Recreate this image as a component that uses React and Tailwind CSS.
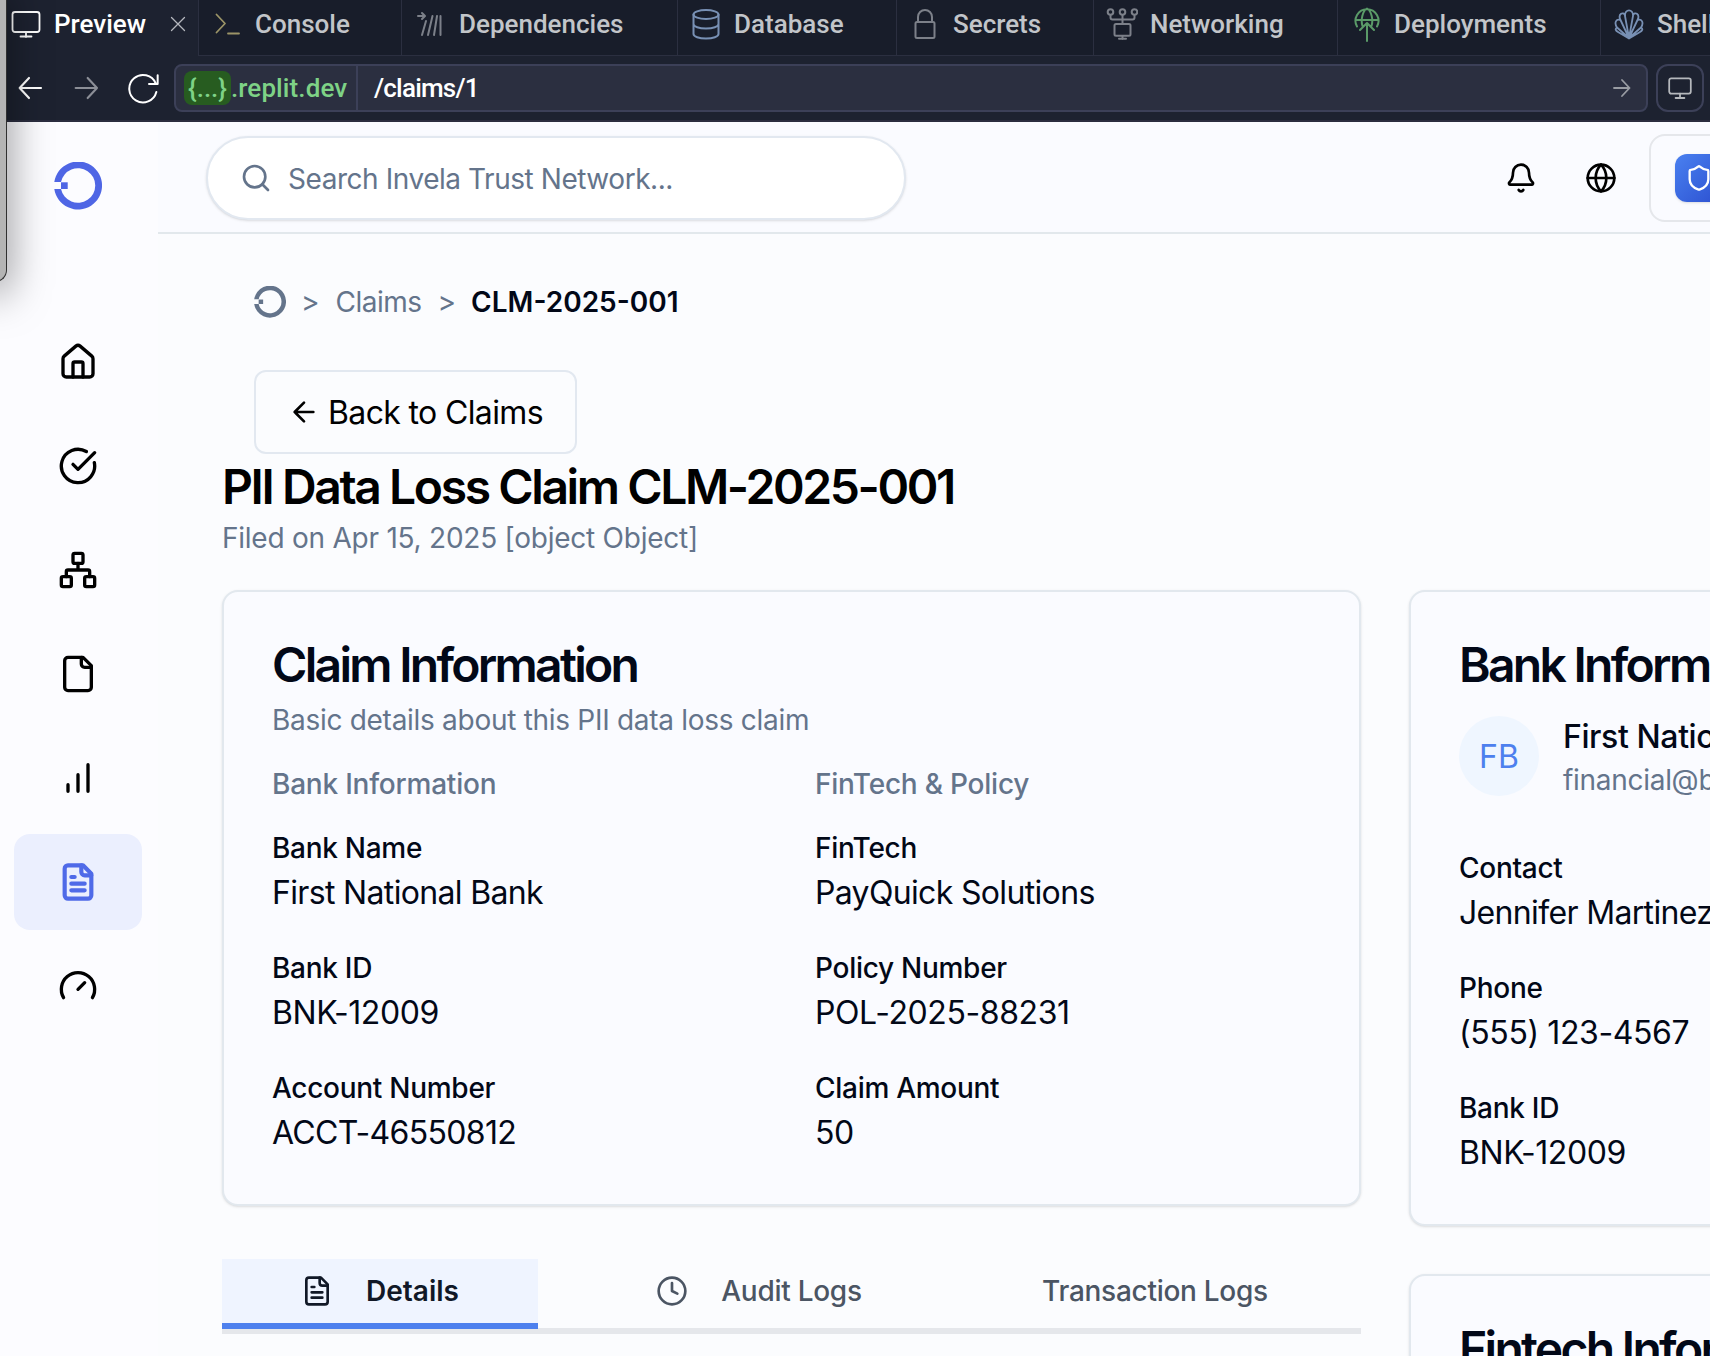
import React from "react";

const strokeProps = { fill: "none", stroke: "currentColor", strokeLinecap: "round", strokeLinejoin: "round" };

function Icon({ className = "size-8", sw = 2, children }) {
  return (
    <svg viewBox="0 0 24 24" strokeWidth={sw} className={`shrink-0 ${className}`} {...strokeProps}>
      {children}
    </svg>
  );
}

const FileShape = () => (
  <>
    <path d="M15 2H6a2 2 0 0 0-2 2v16a2 2 0 0 0 2 2h12a2 2 0 0 0 2-2V7Z" />
    <path d="M14 2v4a2 2 0 0 0 2 2h4" />
  </>
);

const FileTextShape = () => (
  <>
    <FileShape />
    <path d="M10 9H8M16 13H8M16 17H8" />
  </>
);

function Logo({ className }) {
  return (
    <svg viewBox="0 0 48 48" className={className} fill="currentColor">
      <path d="M0.300 20A24 24 0 1 1 0.300 27H7A17.300 17.300 0 1 0 7 20Z" />
      <rect x="7" y="20.300" width="6.700" height="6.700" />
    </svg>
  );
}

function TopTab({ width, icon, children, textClass }) {
  return (
    <div className={`flex h-14 shrink-0 items-start border-b border-l border-[#2b2f40] bg-[#181d2a] ${width}`}>
      <div className="flex h-12 items-center">
        {icon}
        <span className={`font-medium whitespace-nowrap text-[#c2c5c9] ${textClass}`}>{children}</span>
      </div>
    </div>
  );
}

function TabStrip() {
  return (
    <div className="flex h-14 w-[1740px] shrink-0 font-['Roboto',sans-serif] text-[26px] leading-none">
      <div className="flex h-12 w-[198px] shrink-0 items-center pl-[11px] text-white">
        <svg viewBox="0 0 30 30" strokeWidth="1.8" className="size-[30px]" {...strokeProps}>
          <rect x="1.5" y="3" width="27" height="20" rx="2.5" />
          <path d="M15 23v5M9.500 27.500h11" />
        </svg>
        <span className="ml-[13px] w-[92px] font-medium">Preview</span>
        <svg viewBox="0 0 16 16" strokeWidth="1.3" className="ml-6 size-4 text-[#b5b8be]" {...strokeProps}>
          <path d="M1.500 1.500l13 13M14.500 1.500l-13 13" />
        </svg>
      </div>
      <TopTab width="w-[203px]" textClass="ml-[14px]" icon={
        <svg viewBox="0 0 26 26" strokeWidth="1.8" className="ml-4 size-[26px] text-[#9b9467]" {...strokeProps}>
          <path d="M1.500 3.500l8.500 9-8.500 9M13 22.500h11" />
        </svg>
      }>Console</TopTab>
      <TopTab width="w-[276px]" textClass="ml-[17px]" icon={
        <svg viewBox="0 0 26 26" strokeWidth="2" className="ml-[14px] size-[26px] text-[#7c8089]" {...strokeProps}>
          <path d="M2 5h6M6 2l3 3-3 3M10 10l-4 14M16.500 5L12 24M21 5l-3 19M24.500 5v19" />
        </svg>
      }>Dependencies</TopTab>
      <TopTab width="w-[219px]" textClass="ml-[14px]" icon={
        <svg viewBox="0 0 28 32" strokeWidth="2" className="ml-[14px] h-8 w-7 text-[#7890b4]" {...strokeProps}>
          <ellipse cx="14" cy="6.500" rx="12.500" ry="4.500" />
          <path d="M1.500 6.500V26c0 2.500 5.500 4.500 12.500 4.500s12.500-2 12.500-4.500V6.500M1.500 16c0 2.500 5.500 4.500 12.500 4.500s12.500-2 12.500-4.500" />
        </svg>
      }>Database</TopTab>
      <TopTab width="w-[197px]" textClass="ml-[17px]" icon={
        <svg viewBox="0 0 22 32" strokeWidth="2" className="ml-[17px] h-8 w-[22px] text-[#7c8089]" {...strokeProps}>
          <rect x="1.500" y="14" width="19" height="16" rx="1.500" />
          <path d="M4 14V9a7 7 0 0 1 14 0v5" />
        </svg>
      }>Secrets</TopTab>
      <TopTab width="w-[244px]" textClass="ml-3" icon={
        <svg viewBox="0 0 32 34" strokeWidth="2" className="ml-3 h-[34px] w-8 text-[#7c8089]" {...strokeProps}>
          <circle cx="4.500" cy="5" r="2.800" /><circle cx="16.500" cy="5" r="2.800" /><circle cx="28.500" cy="5" r="2.800" />
          <path d="M4.500 8v2.500a2 2 0 0 0 2 2h20a2 2 0 0 0 2-2V8M16.500 8v9M16.500 29v3M13 31.800h7" />
          <rect x="8.500" y="17" width="16" height="11.800" rx="1.500" />
        </svg>
      }>Networking</TopTab>
      <TopTab width="w-[263px]" textClass="ml-[14px]" icon={
        <svg viewBox="0 0 26 36" strokeWidth="2" className="ml-4 h-9 w-[26px] text-[#5a9a68]" {...strokeProps}>
          <path d="M3 20.500A11.500 11.500 0 1 1 23 20.500M1.500 14h23M8.500 20c-2-6 0-15 4.500-17.500C17.500 5 19.500 14 17.500 20M13 35V18M6 24l7-7 7 7" />
        </svg>
      }>Deployments</TopTab>
      <TopTab width="w-[140px]" textClass="ml-[13px]" icon={
        <svg viewBox="0 0 30 32" strokeWidth="1.8" className="ml-[13px] h-8 w-[30px] text-[#7890b4]" {...strokeProps}>
          <path d="M15 30L11 8c-.5-7.500 8.500-7.500 8 0ZM15 30L6.500 12C3.500 6 9.500 3 11 7.500M15 30l8.500-18c3-6-3-9-4.500-4.500M15 30L3 19.500C-.5 14 3 10.500 6 12M15 30l12-10.500c3.500-5.500 0-9-3-7.500M3 19.500C.5 21 2 23 4 24l11 6.500L26 24c2-1 3.500-3 1-4.500" />
          <path d="M10 27l5-3 5 3-5 4Z" fill="currentColor" stroke="none" />
        </svg>
      }>Shell</TopTab>
    </div>
  );
}

function AddressBar() {
  return (
    <div className="flex h-[66px] shrink-0 items-center border-b-2 border-[#2b2d3f] pl-[13px] font-['Roboto',sans-serif] text-[26px] leading-none text-white">
      <Icon sw={1.6} className="size-8"><path d="M21 12H5M12 4.500L5 12l7 7.500" /></Icon>
      <Icon sw={1.6} className="ml-[26px] size-8 text-[#8b8e96]"><path d="M3.500 12h16M12.500 4.500l7 7.500-7 7.500" /></Icon>
      <Icon sw={1.5} className="ml-6 size-8"><path d="M21.500 8.500A10.300 10.300 0 1 0 22 15M23 2.500v6.500h-6.500" /></Icon>
      <div className="ml-[15px] flex h-12 w-[1474px] shrink-0 items-center rounded-lg border-2 border-[#3c4058] bg-[#2b2f40]">
        <div className="flex h-full w-[182px] items-center border-r-2 border-[#3c4058] pl-2 text-[#7ed286]">
          <span className="flex h-[34px] w-[47px] items-center justify-center rounded-lg bg-[#275c20] font-medium">{"{...}"}</span>
          <span className="font-medium tracking-[0.1px]">.replit.dev</span>
        </div>
        <span className="ml-4 font-medium tracking-[-0.8px]">/claims/1</span>
        <Icon sw={1.8} className="ml-auto mr-[12px] size-6 text-[#999ca3]"><path d="M4 12h15.500M12 4l7.500 8-7.500 8" /></Icon>
      </div>
      <div className="ml-2 flex h-12 w-12 shrink-0 items-center justify-center rounded-xl border-2 border-[#3c4058]">
        <svg viewBox="0 0 30 30" strokeWidth="2.200" className="size-6 text-[#b5b8bc]" {...strokeProps}>
          <rect x="1.500" y="3" width="27" height="19" rx="2.500" />
          <path d="M15 22v5M9.500 27.500h11" />
        </svg>
      </div>
    </div>
  );
}

function NavItem({ active, children }) {
  return (
    <div className={active ? "flex h-24 items-center justify-center rounded-2xl bg-[#ebeffe] text-[#4f6ae8]" : "flex h-24 items-center justify-center text-black"}>
      <Icon sw={active ? 2.5 : 2} className="size-10">{children}</Icon>
    </div>
  );
}

function Sidebar() {
  return (
    <aside className="w-[158px] shrink-0 bg-[#fcfcff] pr-4 pl-[14px]">
      <div className="flex h-48 justify-center pt-10">
        <Logo className="size-12 text-[#4f66e5]" />
      </div>
      <nav className="flex flex-col gap-2">
        <NavItem>
          <path d="M15 21v-8a1 1 0 0 0-1-1h-4a1 1 0 0 0-1 1v8" />
          <path d="M3 10a2 2 0 0 1 .709-1.528l7-6a2 2 0 0 1 2.582 0l7 6A2 2 0 0 1 21 10v9a2 2 0 0 1-2 2H5a2 2 0 0 1-2-2z" />
        </NavItem>
        <NavItem>
          <path d="M21.801 10A10 10 0 1 1 17 3.335" />
          <path d="m9 11 3 3L22 4" />
        </NavItem>
        <NavItem>
          <rect x="16" y="16" width="6" height="6" rx="1" />
          <rect x="2" y="16" width="6" height="6" rx="1" />
          <rect x="9" y="2" width="6" height="6" rx="1" />
          <path d="M5 16v-3a1 1 0 0 1 1-1h12a1 1 0 0 1 1 1v3M12 12V8" />
        </NavItem>
        <NavItem><FileShape /></NavItem>
        <NavItem><path d="M12 20V10M18 20V4M6 20v-4" /></NavItem>
        <NavItem active><FileTextShape /></NavItem>
        <NavItem><path d="m12 14 4-4M3.340 19a10 10 0 1 1 17.320 0" /></NavItem>
      </nav>
    </aside>
  );
}

function Header() {
  return (
    <header className="flex h-28 items-center border-b-2 border-[#e2e8ec] bg-[#fafbff] pt-[2px] pl-12">
      <div className="flex h-[84px] w-[700px] items-center rounded-full border-2 border-[#e2e8f0] bg-white pl-8 shadow-sm">
        <Icon className="size-8 text-[#64748b]"><circle cx="11" cy="11" r="8" /><path d="m21 21-4.300-4.300" /></Icon>
        <span className="ml-4 pt-[2px] text-[28px] tracking-[-0.45px] text-[#64748b]">Search Invela Trust Network...</span>
      </div>
      <Icon className="ml-[599px] size-8 text-black">
        <path d="M10.268 21a2 2 0 0 0 3.464 0" />
        <path d="M3.262 15.326A1 1 0 0 0 4 17h16a1 1 0 0 0 .740-1.673C19.410 13.956 18 12.499 18 8A6 6 0 0 0 6 8c0 4.499-1.411 5.956-2.738 7.326" />
      </Icon>
      <Icon className="ml-12 size-8 text-black">
        <circle cx="12" cy="12" r="10" />
        <path d="M12 2a14.500 14.500 0 0 0 0 20 14.500 14.500 0 0 0 0-20M2 12h20" />
      </Icon>
      <div className="ml-8 flex h-[88px] w-[300px] shrink-0 items-center rounded-2xl border-2 border-[#e5e7eb] pl-6">
        <div className="flex size-12 items-center justify-center rounded-xl bg-linear-to-br from-[#4a80f0] to-[#2d4fd0] text-white shadow-sm">
          <Icon className="size-7">
            <path d="M20 13c0 5-3.500 7.500-7.660 8.950a1 1 0 0 1-.670-.010C7.500 20.500 4 18 4 13V6a1 1 0 0 1 1-1c2 0 4.500-1.200 6.240-2.720a1.170 1.170 0 0 1 1.520 0C14.510 3.810 17 5 19 5a1 1 0 0 1 1 1z" />
          </Icon>
        </div>
      </div>
    </header>
  );
}

function Field({ label, value, code }) {
  return (
    <div className="h-[120px] whitespace-nowrap">
      <div className="text-[28px] leading-10 font-medium tracking-[-0.28px]">{label}</div>
      <div className={code ? "mt-px text-[32px] leading-12 tracking-[-0.4px]" : "mt-px text-[32px] leading-12 tracking-[-0.66px]"}>{value}</div>
    </div>
  );
}

function Card({ className, title, children }) {
  return (
    <section className={`rounded-2xl border-2 border-[#e2e8ee] bg-[#fafbff] px-12 pt-[49px] text-[#020817] shadow-sm ${className}`}>
      <h2 className="text-[48px] leading-12 font-semibold tracking-[-2.7px] whitespace-nowrap">{title}</h2>
      {children}
    </section>
  );
}

function Tabs() {
  return (
    <div className="mt-[53px] flex h-[75px] items-start border-b-[6px] border-[#e5e7eb] text-[28px] font-medium tracking-[-0.28px] text-[#4b5563]">
      <div className="z-10 -mb-px flex h-[70px] w-[316px] shrink-0 items-center justify-center gap-[33px] border-b-[6px] border-[#4d80ee] bg-[#eff4ff] font-semibold tracking-normal text-[#111827]">
        <Icon className="size-8"><FileTextShape /></Icon>
        <span>Details</span>
      </div>
      <div className="flex h-16 w-[442px] shrink-0 items-center justify-center gap-[33px]">
        <Icon className="size-8"><circle cx="12" cy="12" r="10" /><path d="M12 6v6l4 2" /></Icon>
        <span>Audit Logs</span>
      </div>
      <div className="flex h-16 w-[350px] shrink-0 items-center justify-center">Transaction Logs</div>
    </div>
  );
}

export default function App() {
  return (
    <div className="relative flex h-[1356px] w-[1710px] flex-col overflow-hidden bg-[#1d2230] font-['Inter',sans-serif]">
      <TabStrip />
      <AddressBar />
      <div className="flex min-h-0 flex-1 bg-[#fbfcfe]">
        <Sidebar />
        <div className="w-[1900px] shrink-0">
          <Header />
          <main className="pl-16">
            <div className="flex h-[136px] items-center pl-8 text-[28px] text-[#64748b]">
              <Logo className="size-8" />
              <span className="ml-[15px]">&gt;</span>
              <span className="ml-4 tracking-[-0.5px]">Claims</span>
              <span className="ml-4">&gt;</span>
              <span className="ml-[15px] font-semibold text-[#020817]">CLM-2025-001</span>
            </div>
            <div className="ml-8 flex h-[84px] w-[323px] items-center gap-2 rounded-xl border-2 border-[#e2e8f0] pl-8 text-[32px] text-black">
              <Icon><path d="m12 19-7-7 7-7M19 12H5" /></Icon>
              <span className="pt-px tracking-[-0.64px] whitespace-nowrap">Back to Claims</span>
            </div>
            <h1 className="mt-[3px] h-[60px] text-[48px] leading-[60px] font-semibold tracking-[-2.4px] text-black">PII Data Loss Claim CLM-2025-001</h1>
            <p className="mt-px h-[72px] text-[28px] leading-10 tracking-[-0.24px] text-[#64748b]">Filed on Apr 15, 2025 [object Object]</p>
            <div className="flex items-start gap-12">
              <div className="w-[1139px] shrink-0">
                <Card title="Claim Information" className="h-[616px]">
                  <p className="mt-[11px] text-[28px] leading-10 tracking-[-0.29px] text-[#64748b]">Basic details about this PII data loss claim</p>
                  <div className="mt-6 grid grid-cols-[543px_1fr]">
                    <div>
                      <h3 className="mb-6 text-[28px] leading-10 font-medium tracking-[-0.22px] text-[#64748b]">Bank Information</h3>
                      <Field label="Bank Name" value="First National Bank" />
                      <Field label="Bank ID" value="BNK-12009" code />
                      <Field label="Account Number" value="ACCT-46550812" />
                    </div>
                    <div>
                      <h3 className="mb-6 text-[28px] leading-10 font-medium tracking-[-0.22px] text-[#64748b]">FinTech &amp; Policy</h3>
                      <Field label="FinTech" value="PayQuick Solutions" />
                      <Field label="Policy Number" value="POL-2025-88231" code />
                      <Field label="Claim Amount" value="50" code />
                    </div>
                  </div>
                </Card>
                <Tabs />
              </div>
              <div className="flex w-[552px] shrink-0 flex-col gap-12">
                <Card title="Bank Information" className="h-[636px]">
                  <div className="mt-[27px] mb-[52px] flex h-20 items-center">
                    <div className="flex size-20 items-center justify-center rounded-full bg-[#eff6ff] pt-px text-[32px] text-[#4d80ee]">FB</div>
                    <div className="ml-6 whitespace-nowrap">
                      <div className="pt-px text-[32px] leading-[47px] font-medium tracking-[-0.4px]">First National Bank</div>
                      <div className="text-[28px] leading-10 tracking-[-0.29px] text-[#64748b]">financial@bank.com</div>
                    </div>
                  </div>
                  <Field label="Contact" value="Jennifer Martinez" />
                  <Field label="Phone" value="(555) 123-4567" code />
                  <Field label="Bank ID" value="BNK-12009" code />
                </Card>
                <Card title="Fintech Information" className="h-[636px]" />
              </div>
            </div>
          </main>
        </div>
      </div>
      <div className="absolute -top-5 -left-5 h-[302px] w-[27px] rounded-br-xl border-r border-b border-[#303030] bg-[#b4b4b4] shadow-[0_12px_40px_rgba(0,0,0,0.5)]" />
    </div>
  );
}
